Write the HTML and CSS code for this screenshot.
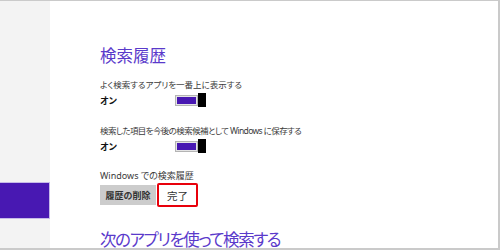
FILE: index.html
```html
<!DOCTYPE html>
<html lang="ja">
<head>
    <meta charset="UTF-8">
    <meta name="viewport" content="width=device-width, initial-scale=1.0">
    <title>検索履歴</title>
    <link rel="stylesheet" href="styles.css">
</head>
<body>
    <div class="frame">
        <div class="sidebar">
            <div class="side-item active"></div>
        </div>

        <div class="main">
            <h1 class="heading">検索履歴</h1>

            <p class="label">よく検索するアプリを一番上に表示する</p>
            <div class="toggle-row">
                <span class="state">オン</span>
                <span class="toggle"><span class="track"></span><span class="thumb"></span></span>
            </div>

            <p class="label second">検索した項目を今後の検索候補として Windows に保存する</p>
            <div class="toggle-row">
                <span class="state">オン</span>
                <span class="toggle"><span class="track"></span><span class="thumb"></span></span>
            </div>

            <p class="label third">Windows での検索履歴</p>
            <div class="button-row">
                <button class="btn-gray">履歴の削除</button>
                <button class="btn-done">完了</button>
            </div>

            <h2 class="heading next">次のアプリを使って検索する</h2>
        </div>
    </div>
</body>
</html>
```

FILE: styles.css
```css
body {
    margin: 0;
    font-family: "Noto Sans", "Noto Sans CJK JP", sans-serif;
    font-feature-settings: "palt";
    background-color: #ffffff;
}

.frame {
    display: flex;
    width: 500px;
    height: 250px;
    box-sizing: border-box;
    border-top: 1px solid #cacaca;
    border-right: 2px solid #cacaca;
    border-bottom: 2px solid #cacaca;
    overflow: hidden;
}

.sidebar {
    width: 50px;
    flex-shrink: 0;
    background-color: #f3f3f3;
    padding-top: 182px;
}

.side-item {
    height: 35px;
    width: 49px;
}

.side-item.active {
    background-color: #4818b2;
    box-shadow: 0 0 0 1px #c6bbe8;
}

.main {
    padding-left: 50px;
    padding-top: 45px;
    display: flex;
    flex-direction: column;
    align-items: flex-start;
}

.heading {
    margin: 0;
    font-size: 16.5px;
    line-height: 20px;
    font-weight: normal;
    color: #5a3acb;
}

.label {
    margin: 13px 0 0;
    font-size: 8.5px;
    line-height: 12px;
    color: #3a3a3a;
}

.label.second {
    margin-top: 18px;
    letter-spacing: -0.6px;
}

.label.third {
    margin-top: 17px;
    font-size: 9px;
}

.toggle-row {
    display: flex;
    align-items: center;
    margin-top: 2px;
    height: 14px;
}

.state {
    width: 75px;
    font-size: 9px;
    font-weight: bold;
    color: #111;
}

.toggle {
    display: flex;
    align-items: center;
}

.track {
    width: 21px;
    height: 9px;
    border: 1px solid #b4b4b4;
    background-color: #4818b2;
    box-shadow: inset 0 0 0 1px #e4e4e4;
}

.thumb {
    width: 8px;
    height: 14px;
    background-color: #000;
}

.button-row {
    display: flex;
    align-items: center;
    margin-top: 1px;
}

.btn-gray {
    width: 56px;
    height: 20px;
    padding: 0;
    border: none;
    background-color: #cccccc;
    font-family: inherit;
    font-size: 9px;
    font-weight: bold;
    color: #333;
}

.btn-done {
    margin-left: 1px;
    width: 41px;
    height: 24px;
    padding: 0;
    border: 2px solid #e8000b;
    border-radius: 2px;
    background-color: #fff;
    font-family: inherit;
    font-size: 10.5px;
    color: #333;
}

.heading.next {
    margin-top: 23px;
    letter-spacing: -1.4px;
}
```
